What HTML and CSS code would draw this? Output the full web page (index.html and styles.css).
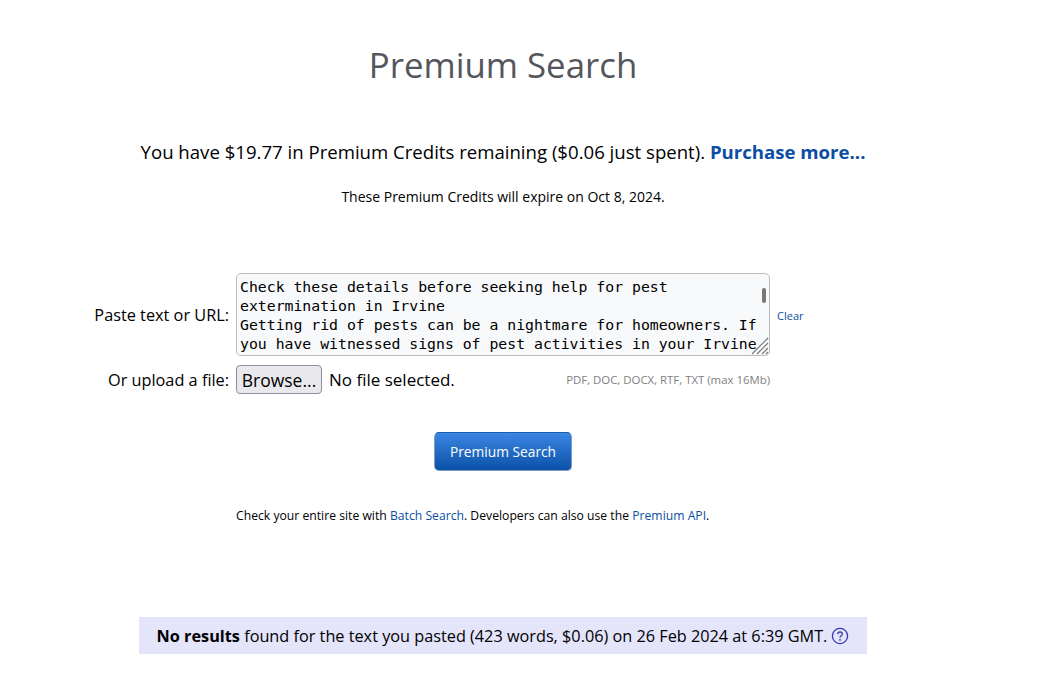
FILE: index.html
```html
<!DOCTYPE html>
<html lang="en">
<head>
  <meta charset="UTF-8" />
  <title>Premium Search</title>
  <link rel="stylesheet" href="styles.css">
</head>
<body>
  <main class="page">
    <h1 class="title">Premium Search</h1>
    <p class="credits">You have $19.77 in Premium Credits remaining ($0.06 just spent). <a href="#" class="purchase">Purchase more...</a></p>
    <p class="expiry">These Premium Credits will expire on Oct 8, 2024.</p>

    <!-- Search form -->
    <form class="search-form">
      <div class="row row-text">
        <label class="row-label" for="text">Paste text or URL:</label>
        <div class="text-wrap">
          <textarea id="text" class="text-input" spellcheck="false">Check these details before seeking help for pest extermination in Irvine
Getting rid of pests can be a nightmare for homeowners. If you have witnessed signs of pest activities in your Irvine home, you should act quickly.</textarea>
          <span class="scroll-thumb"></span>
          <svg class="grip" width="18" height="18" viewBox="0 0 18 18">
            <path d="M1 17L17 1M6 17L17 6M11 17L17 11M15 17L17 15" stroke="#777" stroke-width="1.2" fill="none"/>
          </svg>
        </div>
        <a href="#" class="clear">Clear</a>
      </div>
      <div class="row row-file">
        <span class="row-label">Or upload a file:</span>
        <div class="file-wrap">
          <button type="button" class="browse">Browse...</button>
          <span class="file-name">No file selected.</span>
          <span class="file-types">PDF, DOC, DOCX, RTF, TXT (max 16Mb)</span>
        </div>
      </div>
      <div class="submit-row">
        <button type="submit" class="submit">Premium Search</button>
      </div>
    </form>

    <p class="batch">Check your entire site with <a href="#">Batch Search</a>. Developers can also use the <a href="#">Premium API</a>.</p>

    <!-- Result notice -->
    <div class="result">
      <span><b>No results</b> found for the text you pasted (423 words, $0.06) on 26 Feb 2024 at 6:39 GMT.</span>
      <svg class="help" width="18" height="18" viewBox="0 0 18 18">
        <circle cx="9" cy="9" r="7.6" fill="none" stroke="#3a3ab0" stroke-width="1.3"/>
        <path d="M6.7 7.1C6.8 5.7 7.8 5 9 5c1.3 0 2.3 .8 2.3 2 0 1.9-2.3 1.8-2.3 3.7" fill="none" stroke="#3a3ab0" stroke-width="1.3"/>
        <circle cx="9" cy="12.9" r=".9" fill="#3a3ab0"/>
      </svg>
    </div>
  </main>
</body>
</html>
```

FILE: styles.css
```css
body {
  margin: 0;
  background: #fff;
  color: #000;
  font-family: "Open Sans", "Noto Sans", Arial, sans-serif;
}
a {
  color: #0b4ea2;
  text-decoration: none;
}
.page {
  width: 1006px;
  padding-top: 40px;
}
.title {
  margin: 0;
  text-align: center;
  font-size: 34.8px;
  line-height: 49px;
  font-weight: 400;
  color: #54565c;
}
.credits {
  margin: 50px 0 0;
  text-align: center;
  font-size: 18.6px;
  line-height: 25px;
}
.purchase {
  font-weight: 700;
}
.expiry {
  margin: 23px 0 0;
  text-align: center;
  font-size: 14px;
  line-height: 19px;
}
.search-form {
  margin-top: 67px;
}
.row {
  display: flex;
  align-items: center;
}
.row-label {
  width: 229px;
  text-align: right;
  font-size: 16.3px;
  line-height: 22px;
  margin-right: 7px;
}
.text-wrap {
  position: relative;
  width: 534px;
  height: 83px;
}
.text-input {
  display: block;
  box-sizing: border-box;
  width: 100%;
  height: 100%;
  margin: 0;
  padding: 3px;
  border: 1px solid #bbb;
  border-radius: 5px;
  background: #f8f9fb;
  color: #000;
  font-family: "DejaVu Sans Mono", monospace;
  font-size: 14.8px;
  line-height: 19px;
  overflow: hidden;
  resize: none;
  outline: none;
}
.scroll-thumb {
  position: absolute;
  top: 15px;
  right: 4px;
  width: 4px;
  height: 15px;
  border-radius: 2px;
  background: #777;
}
.grip {
  position: absolute;
  right: 1px;
  bottom: 1px;
}
.clear {
  margin-left: 7px;
  padding-top: 1px;
  font-size: 11px;
  line-height: 15px;
}
.row-file {
  margin-top: 9px;
}
.file-wrap {
  width: 534px;
  display: flex;
  align-items: center;
}
.browse {
  box-sizing: border-box;
  width: 86px;
  height: 29px;
  padding: 0;
  border: 1px solid #8f8f9d;
  border-radius: 4px;
  background: #e9e9ed;
  color: #000;
  font-family: inherit;
  font-size: 17.5px;
}
.file-name {
  margin-left: 7px;
  font-size: 17px;
}
.file-types {
  margin-left: auto;
  font-size: 11.4px;
  color: #808080;
}
.submit-row {
  margin-top: 38px;
  display: flex;
  justify-content: center;
}
.submit {
  box-sizing: border-box;
  width: 138px;
  height: 39px;
  padding: 0;
  border: 1px solid #7d9cc0;
  border-top-color: #1a5cae;
  border-radius: 5px;
  background: linear-gradient(#3c87e2, #0a50a8);
  color: #fff;
  font-family: inherit;
  font-size: 13.75px;
}
.batch {
  margin: 36px 0 0 236px;
  font-size: 12.2px;
  line-height: 17px;
}
.result {
  box-sizing: border-box;
  width: 728px;
  height: 37px;
  margin: 93px 0 0 139px;
  display: flex;
  align-items: center;
  justify-content: center;
  gap: 4px;
  background: #e4e4fb;
  font-size: 16.25px;
}
.help {
  flex: none;
}
```
